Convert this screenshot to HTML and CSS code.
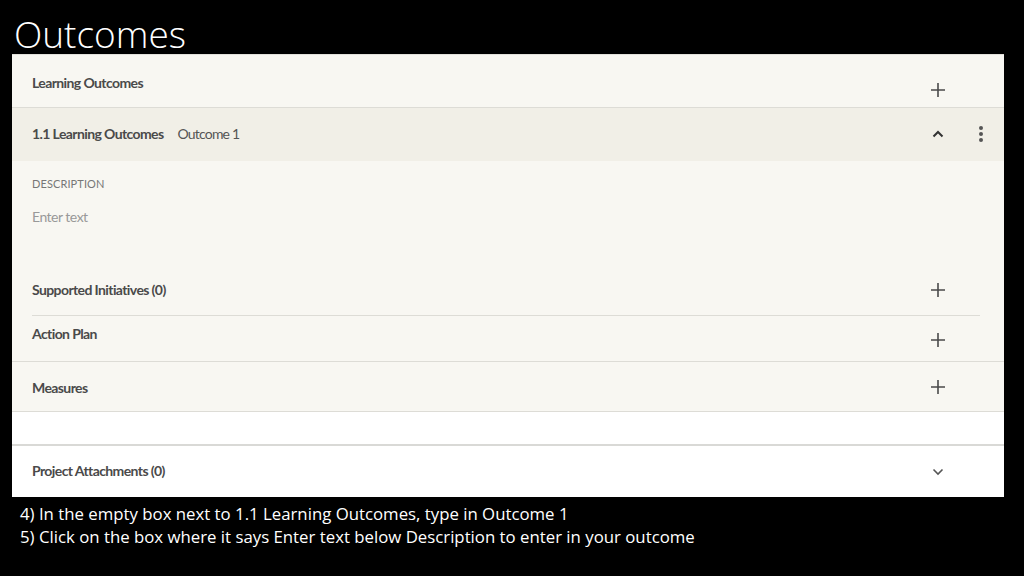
FILE: index.html
```html
<!DOCTYPE html>
<html>
<head>
<meta charset="utf-8">
<link rel="stylesheet" href="styles.css">
</head>
<body>
<div class="slide">
  <h1 class="title">Outcomes</h1>
  <div class="panel">
    <div class="row row-top">
      <span class="label">Learning Outcomes</span>
      <div class="icons icons-single">
        <span class="icon icon-low">
          <svg width="14" height="14" viewBox="0 0 14 14"><path d="M7 0v14M0 7h14" stroke="#4a4a4a" stroke-width="1.6" fill="none"/></svg>
        </span>
      </div>
    </div>
    <div class="row row-sub">
      <span class="label">1.1 Learning Outcomes</span>
      <span class="value">Outcome 1</span>
      <div class="icons icons-double">
        <span class="icon">
          <svg width="12" height="8" viewBox="0 0 12 8"><path d="M1.5 6.5L6 2l4.5 4.5" stroke="#333" stroke-width="2" fill="none"/></svg>
        </span>
        <span class="icon">
          <svg width="6" height="18" viewBox="0 0 6 18"><circle cx="3" cy="3" r="2" fill="#555"/><circle cx="3" cy="9" r="2" fill="#555"/><circle cx="3" cy="15" r="2" fill="#555"/></svg>
        </span>
      </div>
    </div>
    <div class="desc">
      <div class="desc-label">DESCRIPTION</div>
      <div class="desc-input">Enter text</div>
    </div>
    <div class="row row-init">
      <span class="label">Supported Initiatives (0)</span>
      <div class="icons icons-single">
        <span class="icon">
          <svg width="14" height="14" viewBox="0 0 14 14"><path d="M7 0v14M0 7h14" stroke="#4a4a4a" stroke-width="1.6" fill="none"/></svg>
        </span>
      </div>
    </div>
    <div class="row row-action">
      <span class="label label-high">Action Plan</span>
      <div class="icons icons-single">
        <span class="icon icon-mid">
          <svg width="14" height="14" viewBox="0 0 14 14"><path d="M7 0v14M0 7h14" stroke="#4a4a4a" stroke-width="1.6" fill="none"/></svg>
        </span>
      </div>
    </div>
    <div class="row row-measures">
      <span class="label">Measures</span>
      <div class="icons icons-single">
        <span class="icon">
          <svg width="14" height="14" viewBox="0 0 14 14"><path d="M7 0v14M0 7h14" stroke="#4a4a4a" stroke-width="1.6" fill="none"/></svg>
        </span>
      </div>
    </div>
    <div class="spacer"></div>
    <div class="row row-attach">
      <span class="label">Project Attachments (0)</span>
      <div class="icons icons-single">
        <span class="icon">
          <svg width="12" height="8" viewBox="0 0 12 8"><path d="M1.5 1.5L6 6l4.5-4.5" stroke="#555" stroke-width="1.6" fill="none"/></svg>
        </span>
      </div>
    </div>
  </div>
  <div class="notes">
    <p>4) In the empty box next to 1.1 Learning Outcomes, type in Outcome 1</p>
    <p>5) Click on the box where it says Enter text below Description to enter in your outcome</p>
  </div>
</div>
</body>
</html>
```

FILE: styles.css
```css
html, body {
  margin: 0;
  padding: 0;
  background: #000;
}
.slide {
  width: 1024px;
  height: 576px;
  background: #000;
  display: flex;
  flex-direction: column;
  overflow: hidden;
}
.title {
  margin: 0;
  height: 54px;
  padding-left: 14px;
  padding-bottom: 2px;
  font-family: "Open Sans", sans-serif;
  font-weight: 300;
  font-size: 37px;
  line-height: 1;
  color: #fff;
  box-sizing: border-box;
  display: flex;
  align-items: flex-end;
}
.panel {
  margin-left: 12px;
  width: 992px;
  background: #f8f7f2;
  border-top: 1px solid #e2e1db;
  font-family: "Lato", sans-serif;
  color: #4a4a4a;
}
.row {
  display: flex;
  align-items: center;
  padding-left: 20px;
  box-sizing: border-box;
}
.label {
  font-weight: 700;
  font-size: 14px;
  letter-spacing: -0.6px;
  color: #4a4a4a;
}
.value {
  margin-left: 14px;
  font-size: 14px;
  letter-spacing: -0.8px;
  color: #555;
  flex: 1;
}
.row-top .label, .row-init .label, .row-action .label, .row-measures .label, .row-attach .label {
  flex: 1;
}
.icons {
  display: flex;
  align-items: center;
}
.icons-single { margin-right: 54px; }
.icons-double { margin-right: 11px; gap: 19px; }
.icon {
  width: 24px;
  height: 24px;
  display: flex;
  align-items: center;
  justify-content: center;
}
.icon-low { margin-top: 18px; }
.icon-mid { margin-top: 2px; }
.label-high { margin-bottom: 10px; }
.row-top {
  height: 53px;
  border-bottom: 1px solid #dddcd6;
}
.row-top .label { margin-top: 2px; }
.row-sub {
  height: 53px;
  background: #f1efe7;
}
.row-sub .label, .row-sub .value { margin-bottom: 3px; }
.row-sub .icons { margin-bottom: 2px; }
.desc {
  height: 102px;
  padding-left: 20px;
  box-sizing: border-box;
  padding-top: 16px;
}
.desc-label {
  font-size: 11px;
  letter-spacing: 0.1px;
  color: #777;
  height: 14px;
  line-height: 14px;
}
.desc-input {
  margin-top: 17px;
  font-size: 14px;
  letter-spacing: -0.5px;
  color: #999;
}
.row-init {
  height: 53px;
  position: relative;
}
.row-init::after {
  content: "";
  position: absolute;
  left: 20px;
  right: 24px;
  bottom: 0;
  height: 1px;
  background: #dddcd6;
}
.row-action {
  height: 46px;
  border-bottom: 1px solid #dddcd6;
}
.row-measures {
  height: 50px;
  border-bottom: 1px solid #dddcd6;
}
.row-measures .label { margin-top: 2px; }
.spacer {
  height: 32px;
  background: #fff;
  border-bottom: 2px solid #d9d9d6;
}
.row-attach {
  height: 51px;
  background: #fff;
}
.row-attach .label { margin-bottom: 2px; }
.notes {
  padding-left: 20px;
  padding-top: 5px;
  font-family: "Open Sans", sans-serif;
  font-size: 16.8px;
  color: #fff;
}
.notes p {
  margin: 0;
  line-height: 23px;
}
```
